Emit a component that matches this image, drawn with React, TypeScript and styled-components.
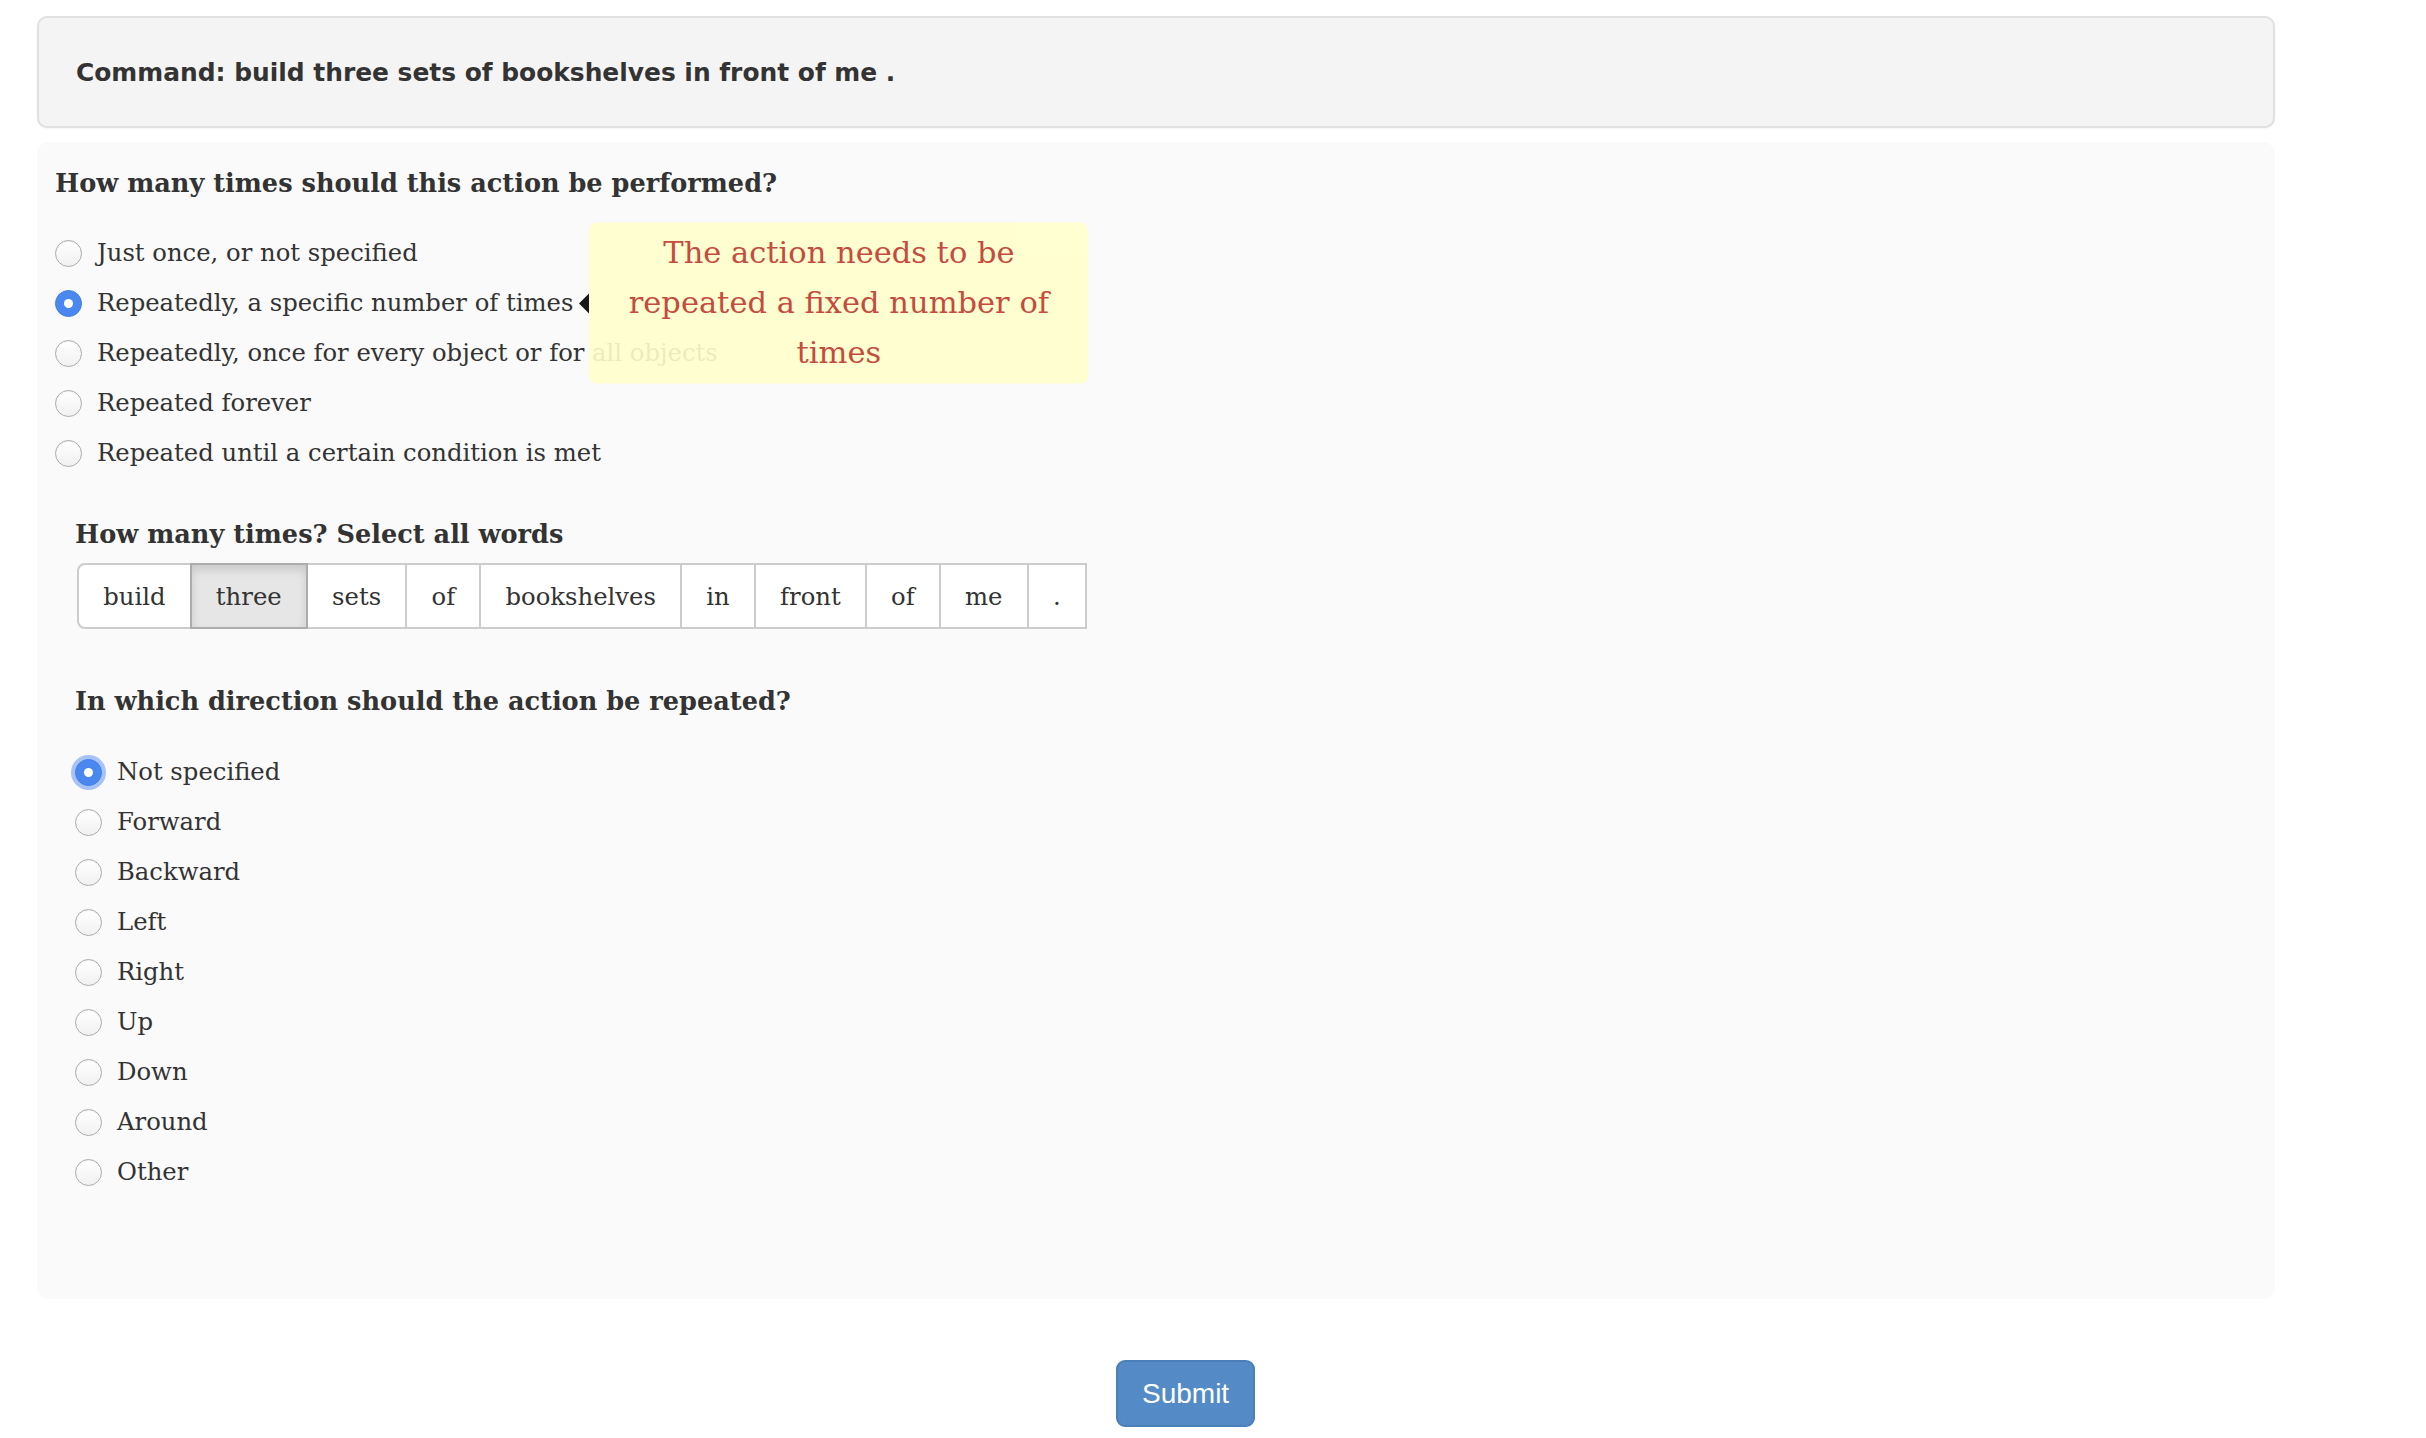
import React from "react";
import styled, { createGlobalStyle } from "styled-components";

const SERIF = `"DejaVu Serif", Georgia, serif`;
const TEXT_SIZE = 24.3;
const HEAD_SIZE = 25.6;

const GlobalStyle = createGlobalStyle`
  html, body { margin: 0; padding: 0; background: #ffffff; }
  body { font-family: ${SERIF}; color: #333333; }
  * { box-sizing: border-box; }
`;

const Page = styled.div`
  width: 2275px;
  padding: 16px 0 0 37px;
`;

const CommandBox = styled.div`
  height: 112px;
  display: flex;
  align-items: center;
  padding-left: 37px;
  background: #f4f4f4;
  border: 2px solid #e0e0e0;
  border-radius: 10px;
  box-shadow: 0 1px 2px rgba(0, 0, 0, 0.04);
  font-family: "DejaVu Sans", Verdana, sans-serif;
  font-weight: 700;
  font-size: 24.9px;
  color: #333333;
`;

const Panel = styled.section`
  margin-top: 14px;
  background: #fafafa;
  border-radius: 12px;
  padding: 21px 18px 102px 18px;
`;

const Question = styled.h3<{ $gap?: number }>`
  margin: ${(p) => p.$gap ?? 0}px 0 0 0;
  font-family: ${SERIF};
  font-weight: 700;
  font-size: ${HEAD_SIZE}px;
  line-height: 40px;
  color: #333333;
`;

const OptionList = styled.div<{ $gap: number }>`
  margin-top: ${(p) => p.$gap}px;
  display: flex;
  flex-direction: column;
`;

const RadioRow = styled.label`
  height: 50px;
  display: flex;
  align-items: center;
  gap: 15px;
  font-size: ${TEXT_SIZE}px;
  line-height: 50px;
  color: #333333;
  white-space: nowrap;
`;

const RadioDot = styled.span<{ $checked?: boolean; $focused?: boolean }>`
  flex: none;
  width: 27px;
  height: 27px;
  border-radius: 50%;
  display: inline-flex;
  align-items: center;
  justify-content: center;
  border: ${(p) => (p.$checked ? "1px solid #3d7fe6" : "1.5px solid #ababab")};
  background: ${(p) =>
    p.$checked ? "#4a88f0" : "linear-gradient(#ffffff, #f1f1f1)"};
  box-shadow: ${(p) =>
    p.$focused
      ? "0 0 0 4px rgba(98, 150, 240, 0.55)"
      : p.$checked
      ? "none"
      : "inset 0 1px 1px rgba(0,0,0,0.05)"};
  &::after {
    content: "";
    display: ${(p) => (p.$checked ? "block" : "none")};
    width: 9px;
    height: 9px;
    border-radius: 50%;
    background: #ffffff;
  }
`;

const LabelText = styled.span`
  position: relative;
`;

const Tooltip = styled.div`
  position: absolute;
  z-index: 10;
  left: calc(100% + 16px);
  top: 50%;
  transform: translateY(-50%);
  width: 499px;
  padding: 5px 14px 6px;
  background: #ffffcc;
  opacity: 0.9;
  border-radius: 8px;
  text-align: center;
  white-space: normal;
  color: #c0392b;
  font-family: ${SERIF};
  font-size: 30.5px;
  line-height: 50px;
  &::before {
    content: "";
    position: absolute;
    left: -10px;
    top: 50%;
    margin-top: -10px;
    border-style: solid;
    border-width: 10px 10px 10px 0;
    border-color: transparent #000000 transparent transparent;
  }
`;

const SubSection = styled.div`
  margin-top: 36px;
  padding-left: 20px;
`;

const WordGroup = styled.div`
  margin-top: 9px;
  margin-left: 2px;
  display: flex;
`;

const WordButton = styled.button<{ $active?: boolean }>`
  height: 66px;
  padding: 0 24.2px;
  margin-left: -2px;
  font-family: ${SERIF};
  font-size: ${TEXT_SIZE}px;
  color: #333333;
  background: ${(p) => (p.$active ? "#e6e6e6" : "#ffffff")};
  border: 2px solid ${(p) => (p.$active ? "#adadad" : "#cccccc")};
  box-shadow: ${(p) =>
    p.$active ? "inset 0 5px 10px rgba(0, 0, 0, 0.125)" : "none"};
  position: relative;
  z-index: ${(p) => (p.$active ? 2 : 1)};
  cursor: pointer;
  &:first-child {
    margin-left: 0;
    border-radius: 8px 0 0 8px;
  }
`;

const Footer = styled.div`
  margin-top: 61px;
  padding-left: 1079px;
  display: flex;
`;

const SubmitButton = styled.button`
  height: 67px;
  padding: 0 24px;
  background: #548bc6;
  border: 2px solid #4a7fb9;
  border-radius: 9px;
  color: #ffffff;
  font-family: "Liberation Sans", Arial, sans-serif;
  font-size: 28px;
  cursor: pointer;
`;

const repeatOptions = [
  "Just once, or not specified",
  "Repeatedly, a specific number of times",
  "Repeatedly, once for every object or for all objects",
  "Repeated forever",
  "Repeated until a certain condition is met",
];

const words = ["build", "three", "sets", "of", "bookshelves", "in", "front", "of", "me", "."];

const directions = ["Not specified", "Forward", "Backward", "Left", "Right", "Up", "Down", "Around", "Other"];

export default function App() {
  return (
    <>
      <GlobalStyle />
      <Page>
        <CommandBox>Command: build three sets of bookshelves in front of me .</CommandBox>
        <Panel>
          <Question>How many times should this action be performed?</Question>
          <OptionList $gap={25}>
            {repeatOptions.map((o, i) => (
              <RadioRow key={o}>
                <RadioDot $checked={i === 1} />
                <LabelText>
                  {o}
                  {i === 1 && <Tooltip>The action needs to be repeated a fixed number of times</Tooltip>}
                </LabelText>
              </RadioRow>
            ))}
          </OptionList>
          <SubSection>
            <Question>How many times? Select all words</Question>
            <WordGroup>
              {words.map((w, i) => (
                <WordButton key={i} $active={i === 1}>
                  {w}
                </WordButton>
              ))}
            </WordGroup>
            <Question $gap={52}>In which direction should the action be repeated?</Question>
            <OptionList $gap={26}>
              {directions.map((d, i) => (
                <RadioRow key={d}>
                  <RadioDot $checked={i === 0} $focused={i === 0} />
                  <LabelText>{d}</LabelText>
                </RadioRow>
              ))}
            </OptionList>
          </SubSection>
        </Panel>
        <Footer>
          <SubmitButton>Submit</SubmitButton>
        </Footer>
      </Page>
    </>
  );
}
